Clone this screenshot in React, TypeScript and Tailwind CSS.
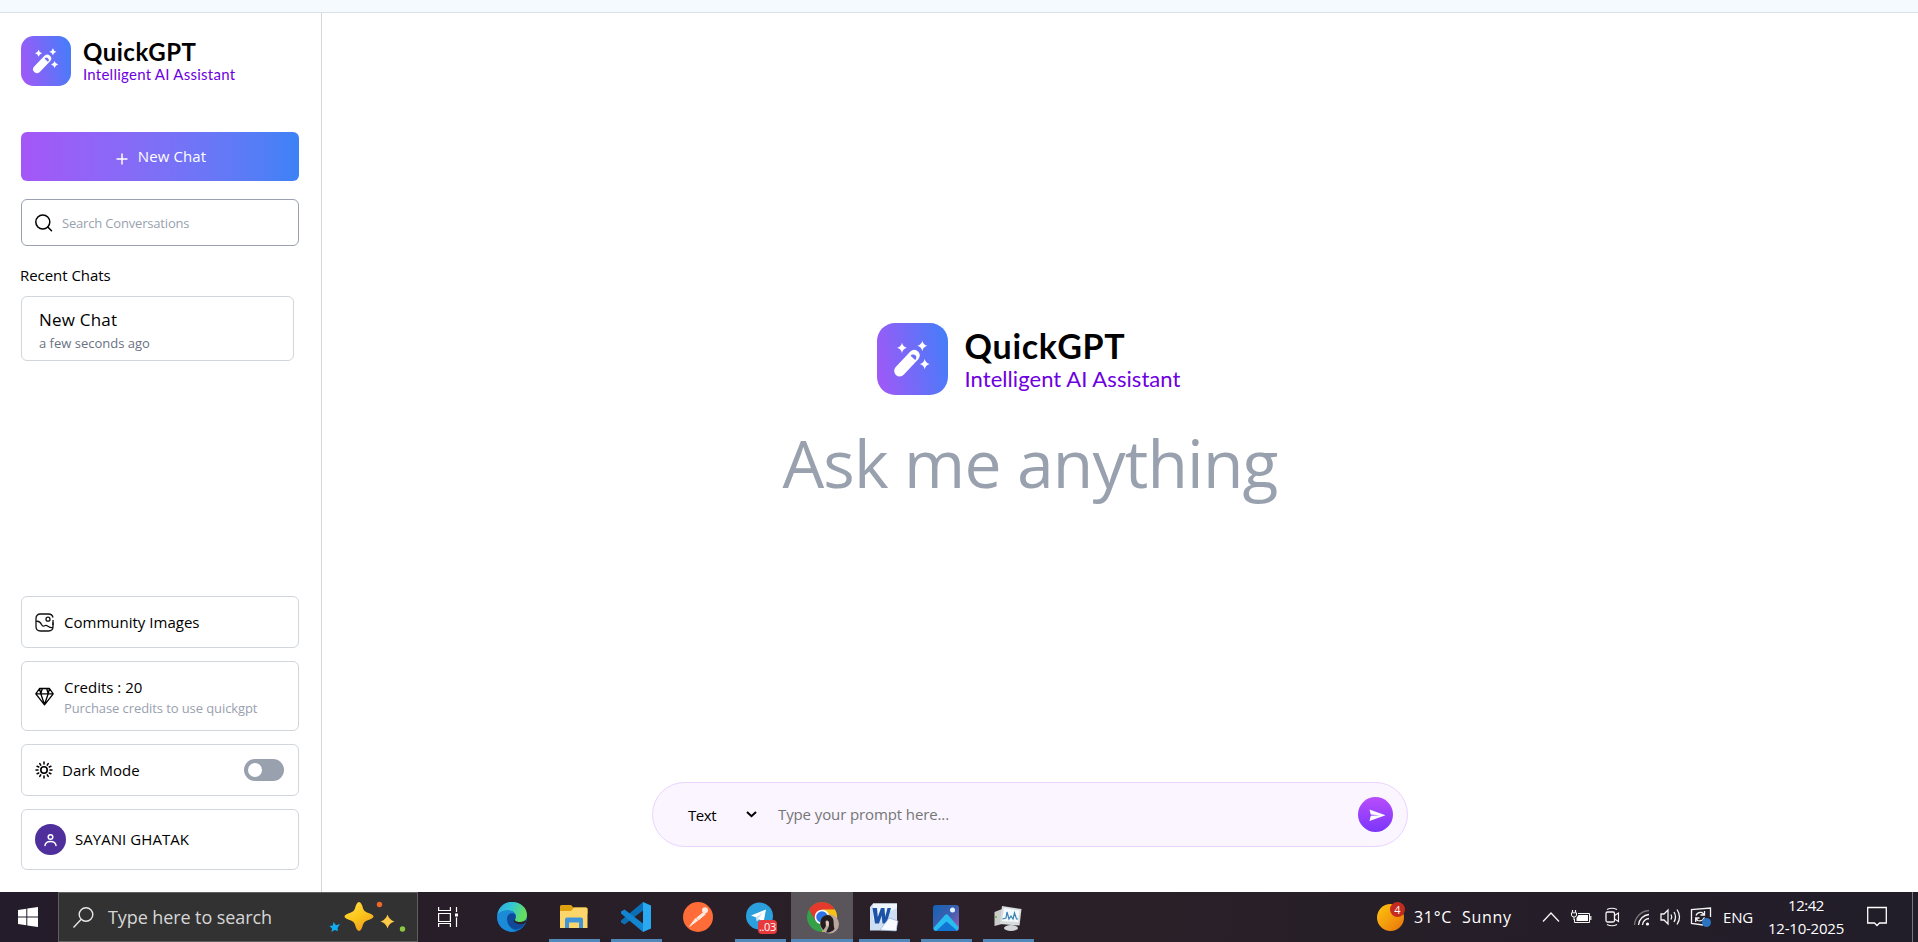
import type { ReactNode } from "react";

function Logo({ className, id }: { className: string; id: string }) {
  return (
    <svg className={className} viewBox="0 0 71 71" preserveAspectRatio="none">
      <defs>
        <linearGradient id={id} x1="0" y1="0.6" x2="1" y2="0.4">
          <stop offset="0" stopColor="#9d5af7" />
          <stop offset="1" stopColor="#477cf9" />
        </linearGradient>
      </defs>
      <rect width="71" height="71" rx="18" fill={`url(#${id})`} />
      <path d="M22.7 47.2 37.3 32" stroke="#fff" strokeWidth="11" strokeLinecap="round" />
      <path d="M33.6 32.2A3.2 3.2 0 1 1 38.200 36.600Z" fill="#6b6ff8" />
      <g fill="#fff">
        <path d="M25 19.5Q26 23.6 30 24.5Q26 25.4 25 29.5Q24 25.4 20 24.5Q24 23.6 25 19.5Z" />
        <path d="M45.3 17.5Q46.3 21.6 50.3 22.5Q46.3 23.4 45.3 27.5Q44.3 23.4 40.3 22.5Q44.3 21.6 45.3 17.5Z" />
        <path d="M47.7 35.5Q48.7 39.6 52.7 40.5Q48.7 41.4 47.7 45.5Q46.7 41.4 42.7 40.5Q46.7 39.6 47.7 35.5Z" />
      </g>
    </svg>
  );
}

function Sidebar() {
  return (
    <aside className="flex w-[322px] shrink-0 flex-col border-r border-[#d1d5dc] pt-[23px] pr-[22px] pb-[22px] pl-[21px] text-[15px] text-black">
      <div className="flex h-[50px] gap-3">
        <Logo id="logo-small" className="size-[50px]" />
        <div className="pt-1 font-['Lato',sans-serif] whitespace-nowrap">
          <div className="text-[24px] leading-6 font-bold tracking-[0.5px]">QuickGPT</div>
          <div className="mt-px text-[15px] leading-[18px] tracking-[0.25px] text-[#6d00e0]">Intelligent AI Assistant</div>
        </div>
      </div>

      <button className="mt-[46px] flex h-[49px] items-center justify-center rounded-md bg-gradient-to-r from-[#a456f7] to-[#3b82f6] pl-[2px] text-white">
        <svg className="mt-[5px] mr-[10px] size-[12px]" viewBox="0 0 12 12" stroke="#fff" strokeWidth="1.5">
          <path d="M6 .5V11.5M.5 6H11.5" />
        </svg>
        <span className="tracking-[0.1px]">New Chat</span>
      </button>

      <div className="mt-[18px] flex h-[47px] items-center rounded-md border border-[#99a1af] pl-[13px]">
        <svg className="size-[18px] shrink-0" viewBox="0 0 18 18" fill="none" stroke="#000" strokeWidth="1.5">
          <circle cx="7.800" cy="8" r="7" />
          <path d="M12.800 13 16.500 16.700" strokeLinecap="round" />
        </svg>
        <input
          className="ml-[9px] w-[200px] pt-[3px] text-[13px] tracking-[-0.18px] outline-none placeholder:text-[#99a1af]"
          placeholder="Search Conversations"
        />
      </div>

      <p className="mt-[17px] -ml-px leading-6 tracking-[-0.05px]">Recent Chats</p>
      <div className="mt-[9px] h-[65px] w-[273px] rounded-md border border-[#d1d5dc] pt-[13px] pl-[17px]">
        <p className="text-[17px] leading-5 tracking-[0.2px]">New Chat</p>
        <p className="mt-[3px] text-[13px] leading-5 text-[#6a7282]">a few seconds ago</p>
      </div>

      <div className="mt-auto flex flex-col gap-[13px]">
        <Card className="h-[52px]">
          <svg className="-ml-px size-[19px]" viewBox="0 0 19 19" fill="none" stroke="#111" strokeWidth="1.3">
            <path d="M18 9.5V13.5Q18 18 13.5 18H5.500Q1 18 1 13.500V5.500Q1 1 5.500 1H13.500Q17.300 1 18 4.500" />
            <path d="M1 8.500C4 7.500 5.500 9.500 6.500 11.500C7.600 13.700 9 13.300 10.200 12.500C12.500 11.300 13.500 15.500 18 14.500M18 7V12" />
            <circle cx="13" cy="6.200" r="2" />
          </svg>
          <span className="ml-[10px] tracking-[0.01px]">Community Images</span>
        </Card>
        <Card className="h-[70px]">
          <svg className="-ml-px size-[19px]" viewBox="0 0 19 19" fill="none" stroke="#000" strokeWidth="1.3" strokeLinejoin="round">
            <path d="M4.500 1.500H14.500L18.200 6.800 9.500 17.800.8 6.800ZM.8 6.800H18.200M5.800 6.800 9.500 17.500 13.200 6.800M4.500 1.500 5.800 6.800 7.300 1.500M14.500 1.500 13.200 6.800 11.700 1.500" />
          </svg>
          <div className="ml-[10px] pt-[3px] whitespace-nowrap">
            <p className="leading-5">Credits : 20</p>
            <p className="mt-px text-[13px] leading-5 tracking-[-0.09px] text-[#99a1af]">Purchase credits to use quickgpt</p>
          </div>
        </Card>
        <Card className="h-[52px]">
          <svg className="-ml-px size-[18px]" viewBox="0 0 18 18" fill="none" stroke="#000" strokeWidth="1.6" strokeLinecap="round">
            <circle cx="9" cy="9" r="3.200" />
            <path d="M9 1V3M9 15V17M1 9H3M15 9H17M4.800 2.600 5.700 4.200M12.300 13.800 13.200 15.400M13.200 2.600 12.300 4.200M5.700 13.800 4.800 15.400M2.100 5.300 3.800 6M14.200 12 15.900 12.700M15.900 5.300 14.200 6M3.800 12 2.100 12.700" strokeWidth="1.5" />
          </svg>
          <span className="ml-[9px] tracking-[0.05px]">Dark Mode</span>
          <div className="mr-[14px] ml-auto flex h-[22px] w-[40px] items-center rounded-full bg-[#99a1af] pl-1">
            <div className="size-[14px] rounded-full bg-white" />
          </div>
        </Card>
        <Card className="h-[61px]">
          <svg className="-ml-px size-[31px]" viewBox="0 0 31 31" fill="none" stroke="#fff" strokeWidth="1.500">
            <circle cx="15.500" cy="15.500" r="15.500" fill="#4f2f9b" stroke="none" />
            <circle cx="15.500" cy="13" r="2.300" />
            <path d="M10 21.500C10.600 16 20.400 16 21 21.500" strokeLinecap="round" />
          </svg>
          <span className="ml-[9px] tracking-[0.05px]">SAYANI GHATAK</span>
        </Card>
      </div>
    </aside>
  );
}

function Card({ className, children }: { className: string; children: ReactNode }) {
  return <div className={`${className} flex items-center rounded-md border border-[#d1d5dc] pl-[14px]`}>{children}</div>;
}

function Chat() {
  return (
    <main className="flex flex-1 flex-col items-center pt-[310px] pr-[180px] pb-[45px]">
      <div className="flex h-[72px] w-[307px] gap-[17px]">
        <Logo id="logo-large" className="h-[72px] w-[71px] shrink-0" />
        <div className="pt-[5px] font-['Lato',sans-serif] whitespace-nowrap text-black">
          <div className="text-[34px] leading-9 font-bold tracking-[0.73px]">QuickGPT</div>
          <div className="mt-[2px] text-[22px] leading-[26px] tracking-[0.06px] text-[#6d00e0]">Intelligent AI Assistant</div>
        </div>
      </div>
      <h1 className="mt-[31px] text-[66px] leading-[72px] tracking-[-0.82px] whitespace-nowrap text-[#99a1af]">Ask me anything</h1>
      <form className="mt-auto flex h-[65px] w-[756px] items-center rounded-full border border-[#e9d4ff] bg-[#faf5ff] pr-[14px] pl-[35px] text-[15px]">
        <div className="flex w-[69px] items-center justify-between text-black">
          <span className="pt-[2px] tracking-[-0.45px]">Text</span>
          <svg className="h-[7px] w-[11px]" viewBox="0 0 11 7" fill="none" stroke="#000" strokeWidth="2">
            <path d="M1 1 5.500 5.200 10 1" />
          </svg>
        </div>
        <input
          className="ml-[21px] flex-1 tracking-[-0.11px] outline-none placeholder:text-[#757575]"
          placeholder="Type your prompt here..."
        />
        <svg className="size-[35px]" viewBox="0 0 35 35">
          <defs>
            <linearGradient id="send" x1="0" y1="0" x2="0" y2="1">
              <stop offset="0" stopColor="#b84dfb" />
              <stop offset="1" stopColor="#7b35fb" />
            </linearGradient>
          </defs>
          <circle cx="17.500" cy="17.500" r="17.500" fill="url(#send)" />
          <path d="M11.500 12.500 27.500 18.200 11.500 24 12.800 18.800 22 18.200 12.800 17.600Z" fill="#fff" />
        </svg>
      </form>
    </main>
  );
}

function Task({ children, active, running = true }: { children: ReactNode; active?: boolean; running?: boolean }) {
  return (
    <div className={`flex h-[50px] w-[62px] flex-col items-center ${active ? "bg-[#5a545b]" : ""}`}>
      <div className="flex h-[47px] items-center pt-[3px]">{children}</div>
      {running && <div className={`h-[3px] bg-[#5288b9] ${active ? "w-[62px]" : "w-[51px]"}`} />}
    </div>
  );
}

const icon = "size-[30px]";

function Taskbar() {
  return (
    <footer className="flex h-[50px] bg-gradient-to-r from-[#241c2a] via-[#2b2027] to-[#211d29] text-white">
      <div className="flex w-[58px] items-center pl-[18px]">
        <svg className="size-[20px]" viewBox="0 0 20 20" fill="#fff">
          <path d="M0 2.900 8.300 1.700V9.500H0ZM9.300 1.500 20 0V9.500H9.300ZM0 10.500H8.300V18.300L0 17.100ZM9.300 10.500H20V20L9.300 18.500Z" />
        </svg>
      </div>
      <div className="flex w-[360px] items-center border border-[#5f5f5f] bg-[#323232] pl-[14px]">
        <svg className="size-[21px]" viewBox="0 0 21 21" fill="none" stroke="#e8e8e8" strokeWidth="1.400">
          <circle cx="13" cy="7.500" r="6.800" />
          <path d="M8 12.500.5 20.500" />
        </svg>
        <span className="ml-[14px] text-[18px] tracking-[-0.09px] whitespace-nowrap text-[#d6d6d6]">Type here to search</span>
        <svg className="ml-auto mr-[11px] h-[32px] w-[77px]" viewBox="0 0 77 32">
          <defs>
            <linearGradient id="gold" x1="0" y1="0" x2="0.600" y2="1">
              <stop offset="0" stopColor="#ffe04a" />
              <stop offset="0.600" stopColor="#fcc419" />
              <stop offset="1" stopColor="#f0a020" />
            </linearGradient>
          </defs>
          <path d="M30 1Q32.500 1 34 7.500Q35 10.500 38 11.500Q44.500 13.500 44.500 15.500Q44.500 17.500 38 19.500Q35 20.500 34 23.500Q32.500 30 30 30Q27.500 30 26 23.500Q25 20.500 22 19.500Q15.500 17.500 15.500 15.500Q15.500 13.500 22 11.500Q25 10.500 26 7.500Q27.500 1 30 1Z" fill="url(#gold)" />
          <path d="M58.500 13.500Q60 18.700 65.500 20.500Q60 22 58.500 27.500Q57 22 51.500 20.500Q57 18.700 58.500 13.500Z" fill="#fcca45" />
          <path d="M4.500 21 7 24.200 11 23 8.500 27 9 30 5.500 29 2.500 31 3 27.500.5 25 3.800 24.500Z" fill="#12adf0" />
          <circle cx="50.500" cy="3.500" r="2.700" fill="#f1662a" />
          <circle cx="73.500" cy="28" r="2.700" fill="#8bc83f" />
        </svg>
      </div>
      <div className="flex w-[63px] items-center pl-[20px]">
        <svg className="h-[20px] w-[21px]" viewBox="0 0 21 20" fill="none" stroke="#fff" strokeWidth="1.200">
          <path d="M.6 0V3.500H12.400V0M.6 6.500H12.400V14.500H.6ZM.6 20V16.500H12.400V20M18.500 0V5M18.500 10.500V20" />
          <rect x="17" y="6.500" width="3" height="3" fill="#fff" stroke="none" />
        </svg>
      </div>

      <Task running={false}>
        <svg className={icon} viewBox="0 0 30 30">
          <defs>
            <linearGradient id="edge" x1="0" y1="0" x2="1" y2="0.300">
              <stop offset="0" stopColor="#2aa8e0" />
              <stop offset="0.500" stopColor="#35c5d5" />
              <stop offset="1" stopColor="#66e05a" />
            </linearGradient>
          </defs>
          <circle cx="15" cy="15" r="15" fill="#0c6fc4" />
          <path d="M.3 13C2 4 8 0 15 0C24 0 30 6 30 13C30 17.500 27 20 23 20C19.500 20 17.500 19 18 17.500C20.500 14 18 8.500 11.500 8.500C6 8.500 2 10.500.3 13Z" fill="url(#edge)" />
          <path d="M10 15C10 11 13 9 15 9.500C18.500 11 19.500 15 18 17.500C17 20 21 21.500 24 21C26 21 27.500 20 28 20.500C26 26 21 28 17 27C12 25.500 9.500 20 10 15Z" fill="#11499a" />
          <path d="M18 17.500C17.500 19 19.500 20 23 20C26 20 28 19 29.500 17.500L28.500 21C25 23 18 22.500 16.500 18.500Z" fill="#2b2027" />
          <path d="M.3 13C2 10.500 6 8.500 11.500 8.500C15 8.500 18 10.500 19 13C16 10 10 11 10 17C10 23 14 28 20 29C10 32 -1 25 .3 13Z" fill="#1b8bd8" />
        </svg>
      </Task>
      <Task>
        <svg className={icon} viewBox="0 0 30 30">
          <path d="M1 4.500Q1 3 2.500 3H12L14.500 5.500H27Q28.500 5.500 28.500 7V12H1Z" fill="#dfa00f" />
          <path d="M1 9H12L15 5.500H27Q28.500 5.500 28.500 7V26H1Z" fill="#fdd66b" />
          <path d="M6 17.500Q6 15.500 8 15.500H22Q24 15.500 24 17.500V26H20V20.500H10V26H6Z" fill="#4094d8" />
        </svg>
      </Task>
      <Task>
        <svg className={icon} viewBox="0 0 30 30">
          <path d="M22 0V8.500L3.500 22.500 0 20.500V18.500Z" fill="#0b6fb8" />
          <path d="M22 30V21.500L3.500 7.500 0 9.500V11.500Z" fill="#1286d0" />
          <path d="M22 0 30 3.500V26.500L22 30Z" fill="#29a9f2" />
        </svg>
      </Task>
      <Task running={false}>
        <svg className={icon} viewBox="0 0 30 30">
          <circle cx="15" cy="15" r="15" fill="#ff6c37" />
          <circle cx="22" cy="8.300" r="3" fill="#fde9df" />
          <path d="M20.500 10.500 22.500 12 15.500 18 13.500 16ZM12.500 16.500 14.500 18.500 6.500 24.500Z" fill="#fde9df" stroke="#fde9df" strokeWidth="1" />
        </svg>
      </Task>
      <Task>
        <div className="relative">
          <svg className={icon} viewBox="0 0 30 30">
            <circle cx="14.500" cy="14" r="13.500" fill="#2ba0dc" />
            <path d="M6 13.500 21 7.500 18.500 20.500 14 17.300 11.800 19.300 11.300 15.500Z" fill="#fff" />
            <path d="M11.300 15.500 18 10.500 13 16.500 11.800 19.300Z" fill="#b9d9ee" />
          </svg>
          <span className="absolute top-[18px] left-[13px] h-[14px] w-[19px] rounded bg-[#e8393c] text-center text-[11px] leading-[13px] tracking-[-0.3px]">..03</span>
        </div>
      </Task>
      <Task active>
        <svg className={`${icon} overflow-visible`} viewBox="0 0 30 30">
          <circle cx="15" cy="15" r="15" fill="#34a047" />
          <path d="M2 7.500A15 15 0 0 1 28 7.500L15 8 8.500 18.800Z" fill="#e4392c" />
          <path d="M28 7.500A15 15 0 0 1 15 30L21.500 18.800 15 7.500Z" fill="#fbc116" />
          <circle cx="15" cy="15" r="7.300" fill="#fff" />
          <circle cx="15" cy="15" r="5.800" fill="#2f73e8" />
          <circle cx="22.500" cy="22" r="9.500" fill="#b9a79c" />
          <path d="M14 17.500C16 12.500 23 11.500 25 15.500C27.500 17.500 26 22 27.500 27C25 30 21 31 19 30.500L22 24C21.500 18 19.500 19 19 24L16.500 28C13 25 12.800 21 14 17.500Z" fill="#251e20" />
          <path d="M18.500 19.500C20 17.500 22.500 19 22 22 21.500 24.500 19.800 25 19 24Z" fill="#e2c6b8" />
        </svg>
      </Task>
      <Task>
        <svg className={icon} viewBox="0 0 30 30">
          <path d="M4 1.500H28V28.500H1V5Z" fill="#cfdff3" />
          <path d="M4 1.500H28V6L4 18Z" fill="#eef5fc" />
          <path d="M3.500 6H8L8.800 15 12 6H15.500L16.200 15 18.500 6H22L17.500 21.500H13.500L12.700 13.500 10 21.500H6Z" fill="#1d53a6" />
          <path d="M20 16 29 19 27 29 11 28Z" fill="#f8fbff" stroke="#8ba5cc" strokeWidth=".6" />
        </svg>
      </Task>
      <Task>
        <svg className="mt-px size-[28px]" viewBox="0 0 28 28">
          <defs>
            <linearGradient id="photos" x1="0" y1="0" x2="1" y2="1">
              <stop offset="0" stopColor="#1263b5" />
              <stop offset="0.500" stopColor="#3e5fae" />
              <stop offset="1" stopColor="#9a5cb8" />
            </linearGradient>
          </defs>
          <rect x="1" y="1" width="26" height="26" rx="3" fill="url(#photos)" />
          <path d="M1.500 24 13 11Q14.500 9.500 16 11L26.500 23Q26.500 27 23 27H4Q1.500 26.500 1.500 24Z" fill="#27bdf0" />
          <path d="M4 27 14.500 17.500 25 26.500 23 27Z" fill="#1474d2" />
          <circle cx="20.500" cy="6" r="2.500" fill="#e4f3fd" />
        </svg>
      </Task>
      <Task>
        <svg className={icon} viewBox="0 0 30 30">
          <path d="M1.500 10 9 7V22L1.500 24Z" fill="#c9ccc8" />
          <ellipse cx="18" cy="26" rx="7" ry="3" fill="#d3d5d6" />
          <path d="M9 4 28.500 7 26.500 23.500 7 22Z" fill="#d9dcdc" />
          <path d="M11 6 26.500 8.500 25 20 9 19Z" fill="#f3f9fc" />
          <path d="M9.500 17 13 16 14 10 16 17 18 14 20 17 21.500 11 23.500 17H25" fill="none" stroke="#3982b4" strokeWidth="1.200" />
          <circle cx="3" cy="15" r="1" fill="#58b947" />
        </svg>
      </Task>

      <div className="mr-[5px] ml-auto flex border-r border-[#77747b]">
        <div className="relative mt-[11px] size-[28px]">
          <div className="mt-px size-[27px] rounded-full bg-gradient-to-br from-[#fdc70d] to-[#e8720c]" />
          <span className="absolute -top-[1px] left-[13px] size-[15px] rounded-full bg-[#c42b1f] text-center text-[11px] leading-[15px]">4</span>
        </div>
        <div className="ml-[9px] flex w-[127px] items-center gap-[10px] text-[16px] whitespace-nowrap">
          <span className="tracking-[0.69px]">31°C</span>
          <span className="tracking-[0.7px]">Sunny</span>
        </div>
        <div className="flex w-[182px] items-center">
          <svg className="h-[34px] w-[172px]" viewBox="1540 900 172 34" fill="none" stroke="#f5f5f5" strokeWidth="1.300">
            <path d="M1542 921.500 1550 913 1558 921.500" />
            <path d="M1577 913.500H1588.500V922.500H1573.500V919" strokeWidth="1" />
            <path d="M1577.500 915H1587V921H1575.500V918Z" fill="#fff" stroke="none" />
            <path d="M1589.800 916V920M1571.500 910V912.500M1574.500 910V912.500" strokeWidth="1.200" />
            <path d="M1570.500 912.800H1575.500V915Q1575.500 917 1573 917Q1570.500 917 1570.500 915ZM1573 917V920" strokeWidth="1" />
            <rect x="1605" y="912" width="8.500" height="10" rx="1.500" />
            <path d="M1613.500 915.500 1617.500 913V921.500L1613.500 919M1606 909.500Q1611 907 1616 909.500M1606 924.500Q1611 927 1616 924.500" strokeWidth="1.100" />
            <path d="M1633.500 925A15.500 15.500 0 0 1 1648 910.500" stroke="#77747b" />
            <path d="M1637.500 925A11.500 11.500 0 0 1 1648 914.500M1641.500 925A7.500 7.500 0 0 1 1648 918.500" />
            <circle cx="1646.500" cy="924" r="1.600" fill="#fff" stroke="none" />
            <path d="M1660 914H1663L1667 910V924L1663 920H1660ZM1670 914.500Q1671.500 917 1670 919.500M1673 912Q1676 917 1673 922M1676 909.500Q1681 917 1676 924.500" />
            <path d="M1709.500 917V908L1690.500 909.500V923.500L1702 925" />
            <path d="M1695 915.500Q1696.500 911.500 1701 912.500L1703 914.500M1703.500 911V915H1699.500M1703.500 917.500Q1701 922 1696.500 920.500L1695 918.500M1694.700 922V918H1698.500" />
            <circle cx="1705.500" cy="922.500" r="4.500" fill="#2b74c0" stroke="none" />
          </svg>
        </div>
        <span className="w-[41px] self-center text-[15px] tracking-[-0.18px]">ENG</span>
        <div className="flex w-[84px] flex-col items-center pt-[2px] text-[15px] leading-[23px] whitespace-nowrap">
          <span className="tracking-[-0.45px]">12:42</span>
          <span className="tracking-[-0.23px]">12-10-2025</span>
        </div>
        <svg className="mt-[14px] mr-[25px] ml-[19px] h-[21px] w-[20px]" viewBox="0 0 20 21" fill="none" stroke="#fff" strokeWidth="1.300">
          <path d="M.7 1.500H19.300V17H12.500L10 19.500 7.500 17H.7Z" />
        </svg>
      </div>
    </footer>
  );
}

export default function App() {
  return (
    <div className="flex h-[942px] w-[1918px] flex-col overflow-hidden bg-white font-['Open_Sans','Noto_Sans',sans-serif]">
      <div className="h-[13px] shrink-0 border-b border-[#d9e0e6] bg-[#f4fafd]" />
      <div className="flex h-[879px] shrink-0">
        <Sidebar />
        <Chat />
      </div>
      <Taskbar />
    </div>
  );
}
